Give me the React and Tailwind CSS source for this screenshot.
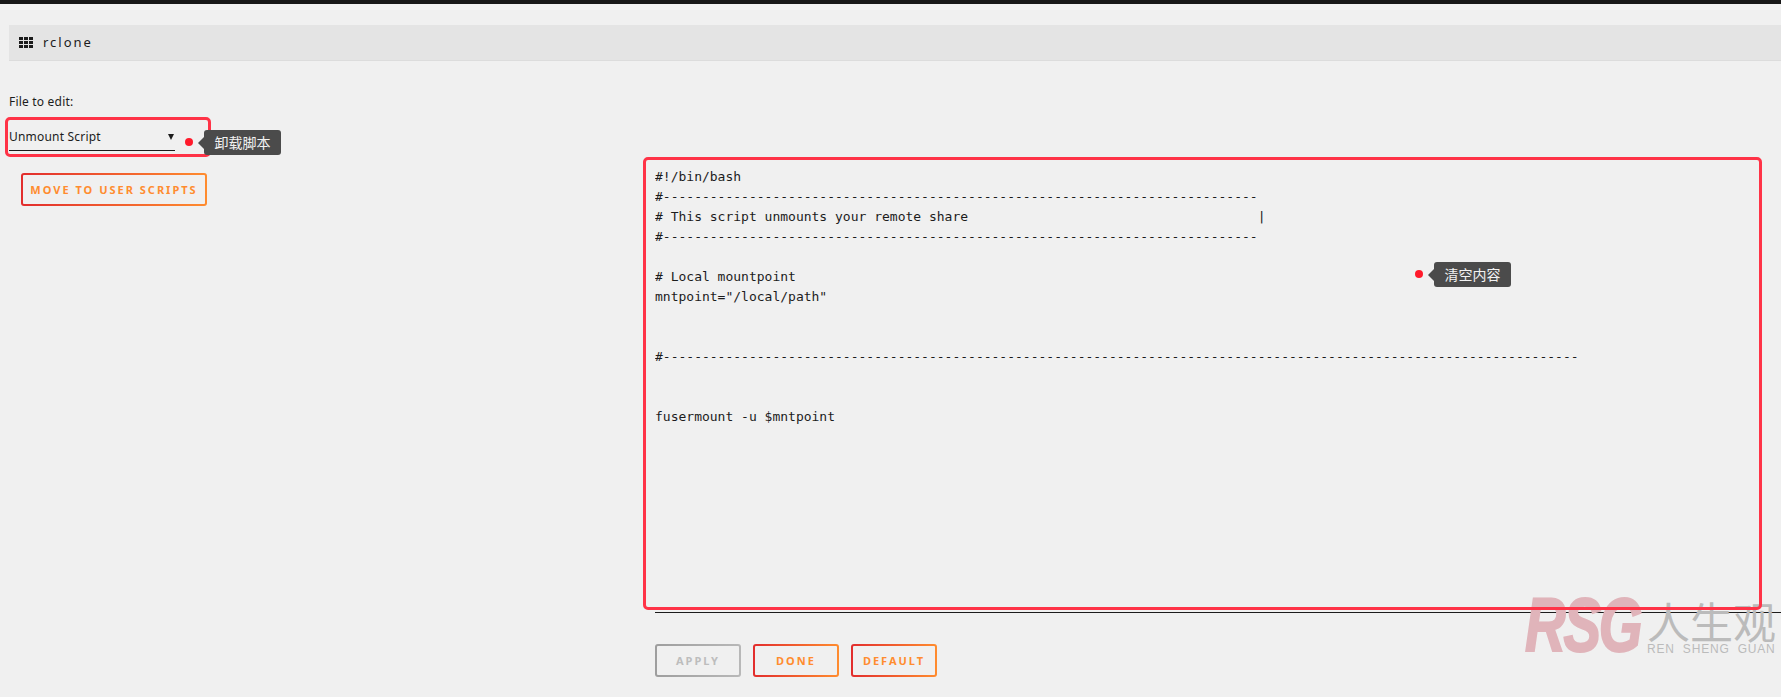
const script = `#!/bin/bash
#${'-'.repeat(76)}
# This script unmounts your remote share${' '.repeat(37)}|
#${'-'.repeat(76)}

# Local mountpoint
mntpoint="/local/path"


#${'-'.repeat(117)}


fusermount -u $mntpoint`;

const gradientBtn =
  'h-[33px] pt-px border-2 border-transparent rounded-[3px] font-["Noto_Sans",sans-serif] text-[11px] font-bold tracking-[2px] uppercase text-[#ff8c2f] [background:linear-gradient(#f0f0f0,#f0f0f0)_padding-box,linear-gradient(90deg,#e22d2d,#ff8c2f)_border-box]';

function Tag({ text, className }) {
  return (
    <div className={`absolute flex items-center ${className}`}>
      <span className="-mt-0.5 w-2 h-2 rounded-full bg-[#ff1a2b]" />
      <span className="ml-[5px] w-0 h-0 border-y-[6px] border-y-transparent border-r-[6px] border-r-[#4b4b4b]" />
      <span className="w-[77px] h-[25px] rounded-[3px] bg-[#4b4b4b] text-[#f2f2f2] text-[14px] leading-[25px] text-center font-['Noto_Sans_CJK_SC',sans-serif]">
        {text}
      </span>
    </div>
  );
}

export default function App() {
  return (
    <div className="relative h-[697px] overflow-hidden bg-[#f0f0f0] text-[#1c1c1c] font-['Noto_Sans',sans-serif]">
      <div className="h-1 bg-[#161616]" />

      <div className="ml-[9px] mt-[21px] h-9 flex items-center pl-2.5 bg-[#e4e4e4] border-b border-[#dcdcdc]">
        <svg width="14" height="11" viewBox="0 0 14 11" fill="#1c1c1c">
          <rect x="0" y="0" width="4" height="3" />
          <rect x="5" y="0" width="4" height="3" />
          <rect x="10" y="0" width="4" height="3" />
          <rect x="0" y="4" width="4" height="3" />
          <rect x="5" y="4" width="4" height="3" />
          <rect x="10" y="4" width="4" height="3" />
          <rect x="0" y="8" width="4" height="3" />
          <rect x="5" y="8" width="4" height="3" />
          <rect x="10" y="8" width="4" height="3" />
        </svg>
        <span className="ml-2.5 text-[13px] tracking-[2px]">rclone</span>
      </div>

      <div className="flex">
        <div className="w-[655px] shrink-0 pl-[9px]">
          <div className="mt-[32px] text-[12px] leading-[18px] tracking-[0.2px]">File to edit:</div>
          <div className="mt-[17px] pt-px w-[166px] h-[23px] flex items-start justify-between border-b border-[#1c1c1c] text-[12px] leading-4 tracking-[0.2px]">
            <span>Unmount Script</span>
            <span className="mt-[5px] mr-[1px] w-0 h-0 border-x-[3px] border-x-transparent border-t-[6px] border-t-[#1c1c1c]" />
          </div>
          <button className={`${gradientBtn} mt-[22px] ml-3 w-[186px]`}>Move to User Scripts</button>
        </div>

        <div className="flex-1 min-w-0">
          <pre className="mt-[106px] h-[446px] border-b border-[#1c1c1c] font-['DejaVu_Sans_Mono',monospace] text-[13px] leading-5 overflow-hidden">
            {script}
          </pre>
          <div className="mt-[31px] flex gap-3">
            <button className="w-[86px] h-[33px] pt-px border-2 border-transparent rounded-[3px] font-['Noto_Sans',sans-serif] text-[11px] font-bold tracking-[2px] text-[#bdbdbd] [background:linear-gradient(#f0f0f0,#f0f0f0)_padding-box,linear-gradient(90deg,#9e9e9e,#b8b8b8)_border-box]">
              APPLY
            </button>
            <button className={`${gradientBtn} w-[86px]`}>Done</button>
            <button className={`${gradientBtn} w-[86px]`}>Default</button>
          </div>
        </div>
      </div>

      {/* watermark */}
      <div className="absolute left-[1525px] top-[587px] w-[256px] flex">
        <span className="w-[122px] shrink-0 origin-left scale-x-[0.74] text-[76px] leading-[76px] font-bold italic tracking-[-3px] text-[#e0b4ba] [-webkit-text-stroke:2px_#e0b4ba] font-['Liberation_Sans',sans-serif]">
          RSG
        </span>
        <div className="w-[134px] shrink-0">
          <div className="mt-2.5 text-[43px] leading-[46px] whitespace-nowrap text-[#bbbbbb] font-['Noto_Sans_CJK_SC',sans-serif]">人生观</div>
          <div className="-mt-px text-[12px] leading-[14px] tracking-[0.8px] [word-spacing:4px] text-[#bbbbbb] whitespace-nowrap font-['Liberation_Sans',sans-serif]">REN SHENG GUAN</div>
        </div>
      </div>

      {/* annotations */}
      <div className="absolute left-[5px] top-[117px] w-[206px] h-10 border-[3px] border-[#ff3347] rounded-[5px]" />
      <div className="absolute left-[643px] top-[157px] w-[1119px] h-[453px] border-[3px] border-[#ff3347] rounded-[5px]" />
      <Tag text="卸载脚本" className="left-[185px] top-[130px]" />
      <Tag text="清空内容" className="left-[1415px] top-[262px]" />
    </div>
  );
}
